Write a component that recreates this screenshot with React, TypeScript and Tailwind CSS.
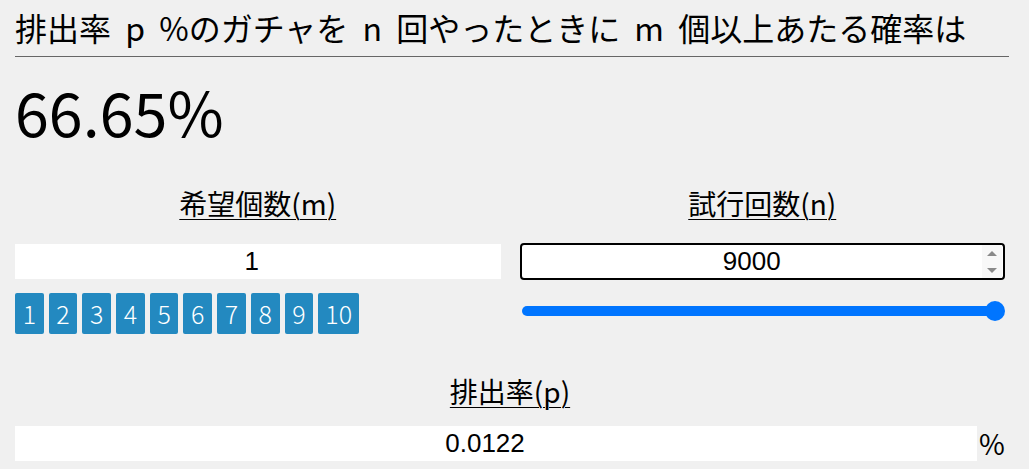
import type { ReactNode } from 'react'

const jp = "font-['Noto_Sans_CJK_JP','Noto_Sans',sans-serif]"
const arial = "font-['Liberation_Sans','Noto_Sans_CJK_JP',sans-serif]"

function FieldLabel({ children }: { children: ReactNode }) {
  return (
    <div className={`text-center text-[28px] leading-[34px] text-black underline underline-offset-[4px] decoration-[1px] ${jp}`}>
      {children}
    </div>
  )
}

function Spinner() {
  return (
    <div className="flex h-full w-[20px] flex-col items-center justify-center gap-[12px] bg-[#f8f8f8]">
      <svg width="10" height="5" viewBox="0 0 10 5">
        <path d="M0 5 L5 0 L10 5 Z" fill="#8a8a8a" />
      </svg>
      <svg width="10" height="5" viewBox="0 0 10 5">
        <path d="M0 0 L10 0 L5 5 Z" fill="#8a8a8a" />
      </svg>
    </div>
  )
}

export default function App() {
  const counts = [1, 2, 3, 4, 5, 6, 7, 8, 9, 10]

  return (
    <div className="min-h-screen bg-[#f0f0f0] px-[15px] pt-[6px] text-black">
      <h2 className={`w-[994px] border-b border-[#666] pb-[8px] text-[32px] leading-[42px] [word-spacing:7px] ${jp}`}>
        排出率 p %のガチャを n 回やったときに m 個以上あたる確率は
      </h2>

      <div className={`mt-[18px] text-[61px] leading-[72px] ${jp}`}>66.65%</div>

      <div className="mt-[39px] grid w-[990px] grid-cols-2 gap-x-[19px]">
        <div>
          <FieldLabel>希望個数(m)</FieldLabel>
          <input
            readOnly
            value="1"
            className={`mt-[24px] block h-[35px] w-full bg-white pr-[12px] text-center text-[26px] outline-none ${arial}`}
          />
          <div className="mt-[14px] flex gap-[5px]">
            {counts.map((n) => (
              <button
                key={n}
                className={`h-[41px] rounded-[2px] bg-[#2389c0] text-center text-[25px] font-light leading-[41px] text-white ${n < 10 ? 'w-[28.7px]' : 'w-[41px]'} ${jp}`}
              >
                {n}
              </button>
            ))}
          </div>
        </div>

        <div>
          <FieldLabel>試行回数(n)</FieldLabel>
          <div className="mt-[23px] flex h-[37px] items-center rounded-[4px] border-2 border-black bg-white pr-[1px]">
            <input
              readOnly
              value="9000"
              className={`h-full min-w-0 flex-1 bg-transparent text-center text-[26px] outline-none ${arial}`}
            />
            <Spinner />
          </div>
          <div className="relative mt-[21px] h-[20px]">
            <div className="absolute left-[2px] right-[10px] top-[5px] h-[10px] rounded-full bg-[#0075ff]" />
            <div className="absolute right-0 top-0 h-[20px] w-[20px] rounded-full bg-[#0075ff]" />
          </div>
        </div>
      </div>

      <div className="mt-[40px] w-[990px]">
        <FieldLabel>排出率(p)</FieldLabel>
        <div className="mt-[14px] flex items-center">
          <input
            readOnly
            value="0.0122"
            className={`block h-[35px] w-[962px] bg-white pr-[22px] text-center text-[26px] outline-none ${arial}`}
          />
          <span className={`ml-[2px] text-[28px] ${jp}`}>%</span>
        </div>
      </div>
    </div>
  )
}
